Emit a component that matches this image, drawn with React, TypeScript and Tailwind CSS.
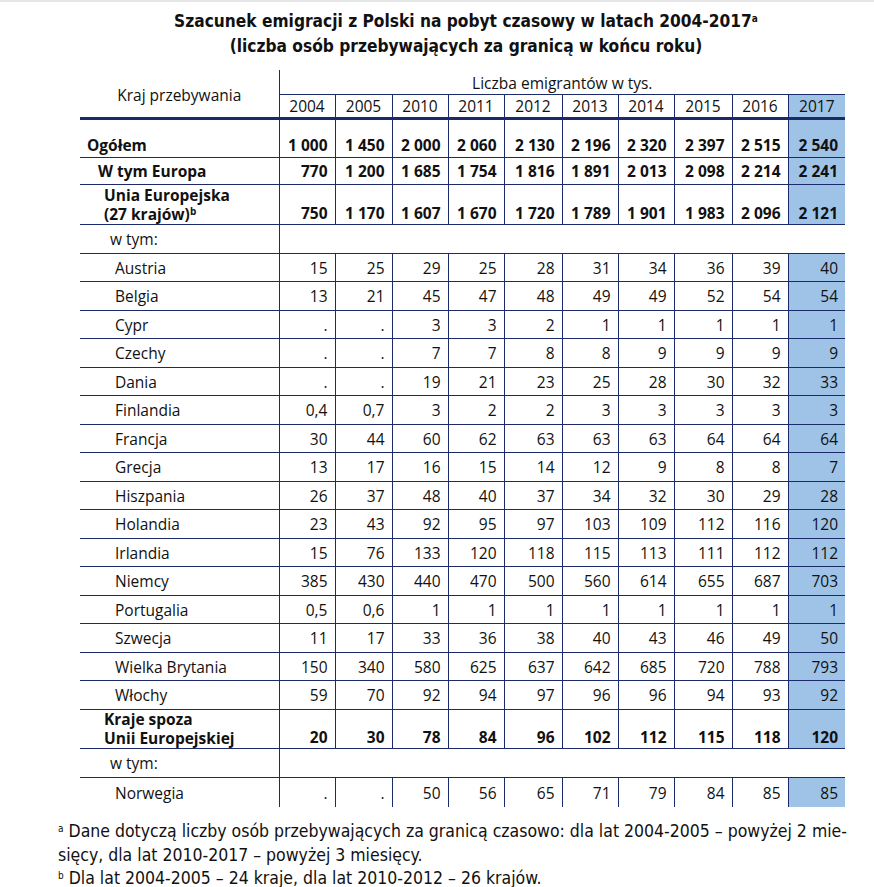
import React from "react";

type Row = {
  label: React.ReactNode;
  values?: (number | string)[];
  kind: "total" | "sub" | "group" | "wtym" | "country";
  h: string;
};

const rows: Row[] = [
  { label: "Ogółem", kind: "total", h: "h-[39px]", values: [1000, 1450, 2000, 2060, 2130, 2196, 2320, 2397, 2515, 2540] },
  { label: "W tym Europa", kind: "sub", h: "h-[27px]", values: [770, 1200, 1685, 1754, 1816, 1891, 2013, 2098, 2214, 2241] },
  {
    label: (
      <>
        Unia Europejska
        <br />
        (27 krajów)<sup className="text-[10px]">b</sup>
      </>
    ),
    kind: "group",
    h: "h-[40px]",
    values: [750, 1170, 1607, 1670, 1720, 1789, 1901, 1983, 2096, 2121],
  },
  { label: "w tym:", kind: "wtym", h: "h-[29px]" },
  { label: "Austria", kind: "country", h: "h-[28.5px]", values: [15, 25, 29, 25, 28, 31, 34, 36, 39, 40] },
  { label: "Belgia", kind: "country", h: "h-[28.5px]", values: [13, 21, 45, 47, 48, 49, 49, 52, 54, 54] },
  { label: "Cypr", kind: "country", h: "h-[28.5px]", values: [".", ".", 3, 3, 2, 1, 1, 1, 1, 1] },
  { label: "Czechy", kind: "country", h: "h-[28.5px]", values: [".", ".", 7, 7, 8, 8, 9, 9, 9, 9] },
  { label: "Dania", kind: "country", h: "h-[28.5px]", values: [".", ".", 19, 21, 23, 25, 28, 30, 32, 33] },
  { label: "Finlandia", kind: "country", h: "h-[28.5px]", values: ["0,4", "0,7", 3, 2, 2, 3, 3, 3, 3, 3] },
  { label: "Francja", kind: "country", h: "h-[28.5px]", values: [30, 44, 60, 62, 63, 63, 63, 64, 64, 64] },
  { label: "Grecja", kind: "country", h: "h-[28.5px]", values: [13, 17, 16, 15, 14, 12, 9, 8, 8, 7] },
  { label: "Hiszpania", kind: "country", h: "h-[28.5px]", values: [26, 37, 48, 40, 37, 34, 32, 30, 29, 28] },
  { label: "Holandia", kind: "country", h: "h-[28.5px]", values: [23, 43, 92, 95, 97, 103, 109, 112, 116, 120] },
  { label: "Irlandia", kind: "country", h: "h-[28.5px]", values: [15, 76, 133, 120, 118, 115, 113, 111, 112, 112] },
  { label: "Niemcy", kind: "country", h: "h-[28.5px]", values: [385, 430, 440, 470, 500, 560, 614, 655, 687, 703] },
  { label: "Portugalia", kind: "country", h: "h-[28.5px]", values: ["0,5", "0,6", 1, 1, 1, 1, 1, 1, 1, 1] },
  { label: "Szwecja", kind: "country", h: "h-[28.5px]", values: [11, 17, 33, 36, 38, 40, 43, 46, 49, 50] },
  { label: "Wielka Brytania", kind: "country", h: "h-[28.5px]", values: [150, 340, 580, 625, 637, 642, 685, 720, 788, 793] },
  { label: "Włochy", kind: "country", h: "h-[28.5px]", values: [59, 70, 92, 94, 97, 96, 96, 94, 93, 92] },
  {
    label: (
      <>
        Kraje spoza
        <br />
        Unii Europejskiej
      </>
    ),
    kind: "group",
    h: "h-[39px]",
    values: [20, 30, 78, 84, 96, 102, 112, 115, 118, 120],
  },
  { label: "w tym:", kind: "wtym", h: "h-[29px]" },
  { label: "Norwegia", kind: "country", h: "h-[30px]", values: [".", ".", 50, 56, 65, 71, 79, 84, 85, 85] },
];

const years = [2004, 2005, 2010, 2011, 2012, 2013, 2014, 2015, 2016, 2017];
const colWidths = [56, 57, 56, 56, 58, 56, 56, 58, 56, 57];

function fmt(v: number | string) {
  if (typeof v === "string") return v;
  if (v >= 1000) return `${Math.floor(v / 1000)}\u00A0${String(v % 1000).padStart(3, "0")}`;
  return String(v);
}

const labelCls: Record<Row["kind"], string> = {
  total: "pl-[7px] font-bold align-top pt-[14px]",
  sub: "pl-[18px] font-bold align-middle pt-[1px]",
  group: "pl-[24px] font-bold leading-[19px] align-bottom pb-0",
  wtym: "pl-[30px] align-middle pt-[1px] leading-[20px]",
  country: "pl-[35px] align-middle pt-[2px]",
};

const numCls: Record<Row["kind"], string> = {
  total: "font-bold align-top pt-[14px]",
  sub: "font-bold align-middle pt-[1px]",
  group: "font-bold align-bottom pb-[1px] leading-[20px]",
  wtym: "",
  country: "align-middle pt-[2px]",
};

const narrow = '"DejaVu Sans Condensed", "Liberation Sans Narrow", "Roboto", sans-serif';

export default function App() {
  return (
    <div
      className="w-[874px] h-[887px] bg-white border-t-2 border-[#e5e5e5] text-[#111] overflow-hidden"
      style={{ fontFamily: '"Open Sans", "Noto Sans", sans-serif' }}
    >
      {/* Title */}
      <div className="pt-[7px] pl-[58px] text-center font-bold text-[17.2px] leading-[25px]" style={{ fontFamily: narrow }}>
        <div>
          Szacunek emigracji z Polski na pobyt czasowy w latach 2004-2017
          <sup className="text-[10px]">a</sup>
        </div>
        <div>(liczba osób przebywających za granicą w końcu roku)</div>
      </div>

      {/* Table */}
      <table className="ml-[80px] mt-[11px] w-[765px] table-fixed border-collapse text-[15.5px]">
        <colgroup>
          <col className="w-[199px]" />
          {colWidths.map((w, i) => (
            <col key={i} style={{ width: w }} />
          ))}
        </colgroup>
        <thead>
          <tr className="h-[24px]">
            <th
              rowSpan={2}
              className="font-normal text-center align-middle pt-[4px] border-r border-r-[#1b2a6b] border-b-[3px] border-b-[#1b2a6b]"
            >
              Kraj przebywania
            </th>
            <th colSpan={10} className="font-normal text-center border-b border-[#1b2a6b] leading-[20px] pt-[2px]">
              Liczba emigrantów w tys.
            </th>
          </tr>
          <tr className="h-[24px]">
            {years.map((y, i) => (
              <th
                key={y}
                className={`font-normal text-center leading-[20px] border-b-[3px] border-b-[#1b2a6b] ${
                  i < years.length - 1 ? "border-r border-r-[#1b2a6b]" : "bg-[#9fc3e7]"
                }`}
              >
                {y}
              </th>
            ))}
          </tr>
        </thead>
        <tbody>
          {rows.map((row, ri) => {
            const last = ri === rows.length - 1;
            const rowBorder = last ? "" : "border-b border-b-[#1b2a6b]";
            return (
              <tr key={ri} className={row.h}>
                <td className={`${labelCls[row.kind]} ${rowBorder} border-r border-r-[#1b2a6b] whitespace-nowrap`}>
                  {row.label}
                </td>
                {row.values ? (
                  row.values.map((v, ci) => (
                    <td
                      key={ci}
                      className={`text-right pr-[7px] ${rowBorder} ${
                        ci < 9 ? "border-r border-r-[#1b2a6b]" : "bg-[#9fc3e7]"
                      } ${numCls[row.kind]} whitespace-nowrap`}
                    >
                      {fmt(v)}
                    </td>
                  ))
                ) : (
                  <td colSpan={10} className={rowBorder} />
                )}
              </tr>
            );
          })}
        </tbody>
      </table>

      {/* Footnotes */}
      <div className="mt-[13px] pl-[58px] text-[17.5px] leading-[23.5px] whitespace-nowrap" style={{ fontFamily: narrow }}>
        <div>
          <sup className="text-[10px]">a</sup> Dane dotyczą liczby osób przebywających za granicą czasowo: dla lat 2004-2005 – powyżej 2 mie-
        </div>
        <div>sięcy, dla lat 2010-2017 – powyżej 3 miesięcy.</div>
        <div>
          <sup className="text-[10px]">b</sup> Dla lat 2004-2005 – 24 kraje, dla lat 2010-2012 – 26 krajów.
        </div>
      </div>
    </div>
  );
}
